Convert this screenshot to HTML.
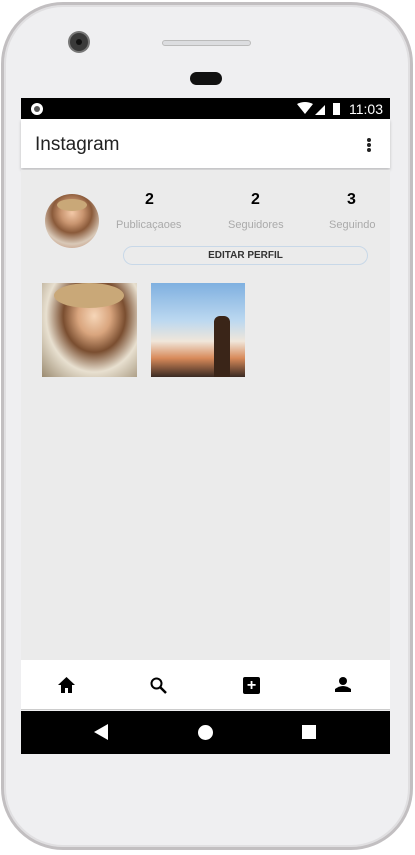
<!DOCTYPE html>
<html><head><meta charset="utf-8"><style>
*{margin:0;padding:0;box-sizing:border-box}
body{width:415px;height:855px;background:#fff;position:relative;overflow:hidden;font-family:"Liberation Sans",sans-serif}
.phone{position:absolute;left:1px;top:2px;width:412px;height:848px;border-radius:62px;background:#efeff1;border:3px solid #c2bfc1;box-shadow:inset 0 0 0 2px #e0dfe1}
.abs{position:absolute}
</style></head><body>
<div class="phone"></div>
<div class="abs" style="left:70px;top:33px;width:18px;height:18px;border-radius:50%;background:#3a3a3a;box-shadow:0 0 0 2px #777"></div>
<div class="abs" style="left:76px;top:39px;width:6px;height:6px;border-radius:50%;background:#111"></div>
<div class="abs" style="left:162px;top:40px;width:89px;height:6px;border-radius:3px;background:#dcdde0;border:1px solid #bbb"></div>
<div class="abs" style="left:190px;top:72px;width:32px;height:13px;border-radius:7px;background:#111"></div>
<!-- status bar -->
<div class="abs" style="left:21px;top:98px;width:369px;height:21px;background:#000"></div>
<div class="abs" style="left:31px;top:103px;width:12px;height:12px;border-radius:50%;background:#fff"></div>
<div class="abs" style="left:34px;top:106px;width:6px;height:6px;border-radius:50%;background:#555"></div>
<svg class="abs" style="left:297px;top:102px" width="45" height="14"><path d="M0 2 Q8 -2 16 2 L8 12Z" fill="#fff"/><path d="M18 13 L28 3 L28 13Z" fill="#fff"/><rect x="36" y="1" width="7" height="12" fill="#fff"/></svg>
<div class="abs" style="left:349px;top:101px;color:#fff;font-size:14px">11:03</div>
<!-- app bar -->
<div class="abs" style="left:21px;top:119px;width:369px;height:49px;background:#fff;box-shadow:0 2px 3px rgba(0,0,0,.2)"></div>
<div class="abs" style="left:35px;top:134px;font-size:19px;color:#222">Instagram</div>
<div class="abs" style="left:367px;top:138px;width:4px;height:4px;border-radius:50%;background:#222;box-shadow:0 5px 0 #222,0 10px 0 #222"></div>
<!-- content -->
<div class="abs" style="left:21px;top:170px;width:369px;height:490px;background:#ebebeb"></div>
<div class="abs" style="left:45px;top:194px;width:54px;height:54px;border-radius:50%;background:radial-gradient(circle at 50% 35%,#f3c9a8 0,#c99570 25%,#8a5a3a 45%,#d9c9b8 70%,#b87c60 100%)"></div>
<div class="abs" style="left:57px;top:199px;width:30px;height:12px;border-radius:50%;background:#c9a878"></div>
<div class="abs" style="left:145px;top:191px;font-size:16px;font-weight:bold">2</div>
<div class="abs" style="left:251px;top:191px;font-size:16px;font-weight:bold">2</div>
<div class="abs" style="left:347px;top:191px;font-size:16px;font-weight:bold">3</div>
<div class="abs" style="left:116px;top:219px;font-size:11px;color:#aaa">Publicaçaoes</div>
<div class="abs" style="left:228px;top:219px;font-size:11px;color:#aaa">Seguidores</div>
<div class="abs" style="left:329px;top:219px;font-size:11px;color:#aaa">Seguindo</div>
<div class="abs" style="left:123px;top:246px;width:245px;height:19px;border:1px solid #c8d8e8;border-radius:10px;text-align:center;font-size:10px;font-weight:bold;line-height:17px;color:#333">EDITAR PERFIL</div>
<div class="abs" style="left:42px;top:283px;width:95px;height:94px;background:radial-gradient(ellipse at 55% 35%,#f6d6b8 0,#d9a57e 22%,#7a4e30 42%,#e8e0d0 65%,#9a8a70 100%)"></div>
<div class="abs" style="left:54px;top:283px;width:70px;height:25px;border-radius:50%;background:#c9a878"></div>
<div class="abs" style="left:151px;top:283px;width:94px;height:94px;background:linear-gradient(180deg,#7fb0e0 0,#bcd8f0 40%,#f0e6da 62%,#d88a5a 80%,#3a2a22 100%)"></div>
<div class="abs" style="left:214px;top:316px;width:16px;height:61px;border-radius:6px 6px 0 0;background:#3a2518"></div>
<!-- bottom nav -->
<div class="abs" style="left:21px;top:660px;width:369px;height:50px;background:#fff;border-bottom:1px solid #ccc"></div>
<svg class="abs" style="left:58px;top:677px" width="17" height="16"><path d="M8.5 0 L17 8 H14 V16 H10 V11 H7 V16 H3 V8 H0Z"/></svg>
<svg class="abs" style="left:150px;top:677px" width="17" height="17"><circle cx="6.5" cy="6.5" r="5" fill="none" stroke="#000" stroke-width="2"/><path d="M10 10 L16 16" stroke="#000" stroke-width="2.5"/></svg>
<div class="abs" style="left:243px;top:677px;width:17px;height:17px;background:#000;border-radius:2px;color:#fff;font-weight:bold;font-size:16px;line-height:17px;text-align:center">+</div>
<svg class="abs" style="left:335px;top:677px" width="16" height="15"><circle cx="8" cy="4" r="4"/><path d="M0 15 V12 Q8 6 16 12 V15Z"/></svg>
<!-- system nav -->
<div class="abs" style="left:21px;top:711px;width:369px;height:43px;background:#000"></div>
<svg class="abs" style="left:94px;top:724px" width="14" height="16"><path d="M0 8 L14 0 V16Z" fill="#fff"/></svg>
<div class="abs" style="left:198px;top:725px;width:15px;height:15px;border-radius:50%;background:#fff"></div>
<div class="abs" style="left:302px;top:725px;width:14px;height:14px;background:#fff"></div>
</body></html>
